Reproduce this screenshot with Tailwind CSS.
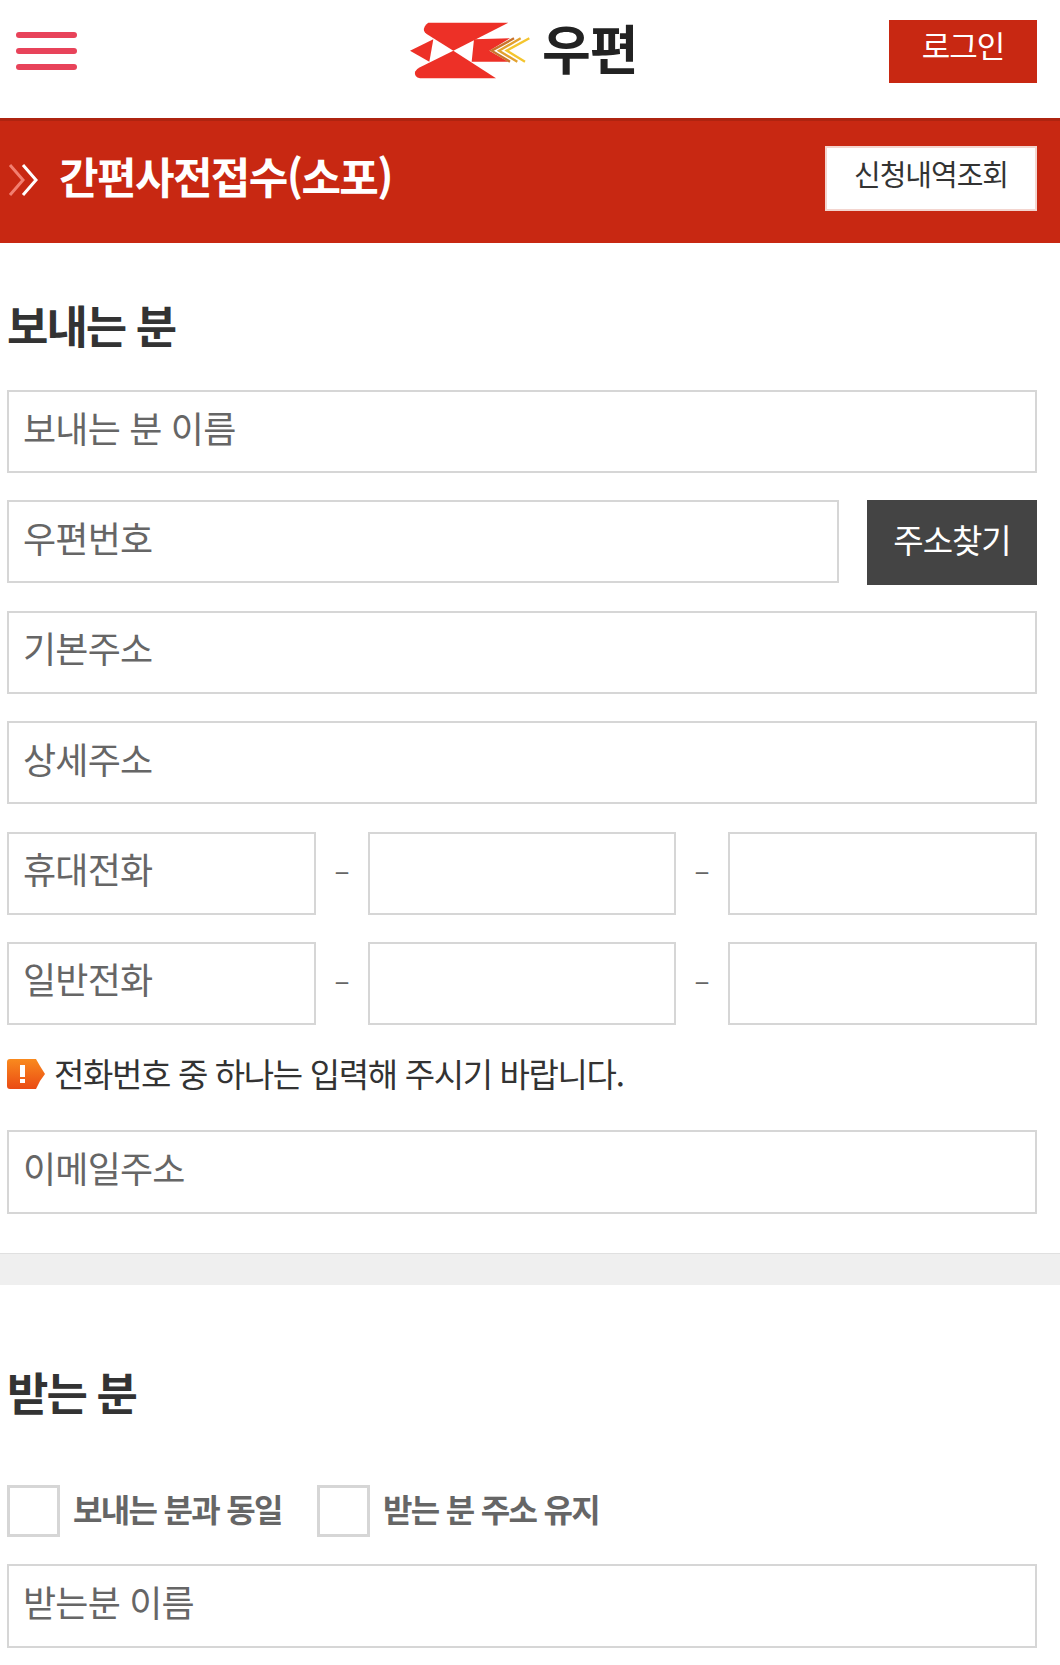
<!DOCTYPE html>
<html lang="ko">
<head>
    <meta charset="UTF-8">
    <meta name="viewport" content="width=device-width, initial-scale=1.0">
    <title>간편사전접수(소포)</title>
    <script src="https://cdn.jsdelivr.net/npm/@tailwindcss/browser@4"></script>
</head>
<body class="bg-white text-[#333] font-['Noto_Sans_CJK_KR','Noto_Sans',sans-serif] w-[1060px] h-[1665px] overflow-hidden">
    <header class="h-[118px] flex items-start pr-[23px]">
        <button class="w-[61px] ml-4 mt-[32px] flex flex-col gap-[10px]">
            <span class="block h-[6px] rounded-full bg-[#e8435a]"></span>
            <span class="block h-[6px] rounded-full bg-[#e8435a]"></span>
            <span class="block h-[6px] rounded-full bg-[#e8435a]"></span>
        </button>
        <div class="ml-[323px] mt-[10px] flex items-start">
            <svg width="150" height="80" viewBox="0 0 450 240">
                <path d="M72 62 Q70 48 85 38 L325 38 L160 122 L80 72 Q74 68 72 62 Z" fill="#ed3027"/>
                <path d="M160 122 L288 205 L60 205 Q42 200 45 185 Q48 178 60 172 Z" fill="#ed3027"/>
                <path d="M30 122 L100 88 L88 155 Z" fill="#ed3027"/>
                <path d="M222 88 L330 85 L268 122 L325 155 L215 155 Z" fill="#ed3027"/>
                <g fill="none" stroke-width="7">
                    <path d="M342 85 L275 122 L330 155" stroke="#c9742c"/>
                    <path d="M362 85 L297 122 L352 155" stroke="#e2a12f"/>
                    <path d="M388 85 L320 122 L375 155" stroke="#f4c52e"/>
                </g>
            </svg>
            <span class="ml-[-8px] mt-[4px] text-[53px] leading-[66px] font-bold text-[#222] tracking-[-1px]">우편</span>
        </div>
        <a class="ml-auto mt-5 w-[148px] h-[63px] bg-[#c82812] text-white text-[31px] leading-[50px] text-center tracking-[-1px]">로그인</a>
    </header>

    <div class="h-[125px] bg-[#c82812] border-t-[3px] border-[#ae2410] flex items-start pr-[23px]">
        <svg class="ml-2 mt-[42px] w-[32px] h-[34px]" viewBox="0 0 32 34" fill="none" stroke-width="3">
            <path d="M2 2 L15 17 L2 32" stroke="#f27f70"/>
            <path d="M15 2 L28 17 L15 32" stroke="#fff"/>
        </svg>
        <h1 class="ml-[19px] mt-[26px] text-[43px] leading-[56px] font-bold text-white tracking-[-1.6px]">간편사전접수(소포)</h1>
        <a class="ml-auto mt-[25px] w-[212px] h-[65px] bg-white border-[2px] border-[#f3d5cf] text-[#333] text-[29px] leading-[51px] text-center tracking-[-1px]">신청내역조회</a>
    </div>

    <main class="px-[7px] w-[1037px] box-content">
        <h2 class="mt-[59px] h-[88px] text-[45px] leading-[46px] font-bold text-[#333] tracking-[-2px]">보내는 분</h2>
        <div class="flex flex-col gap-[27.4px] w-[1030px]">
            <input class="w-full h-[83px] border-2 border-[#d6d6d6] px-[14px] pb-[10px] text-[36px] tracking-[-0.8px] placeholder:text-[#666]" placeholder="보내는 분 이름">
            <div class="flex justify-between h-[83px]">
                <input class="w-[832px] h-[83px] border-2 border-[#d6d6d6] px-[14px] pb-[10px] text-[36px] tracking-[-0.8px] placeholder:text-[#666]" placeholder="우편번호">
                <button class="w-[170px] h-[85px] shrink-0 bg-[#444] text-white text-[33px] pb-[6px] tracking-[-1px]">주소찾기</button>
            </div>
            <input class="w-full h-[83px] border-2 border-[#d6d6d6] px-[14px] pb-[10px] text-[36px] tracking-[-0.8px] placeholder:text-[#666]" placeholder="기본주소">
            <input class="w-full h-[83px] border-2 border-[#d6d6d6] px-[14px] pb-[10px] text-[36px] tracking-[-0.8px] placeholder:text-[#666]" placeholder="상세주소">
            <div class="flex items-center justify-between">
                <input class="w-[309px] h-[83px] border-2 border-[#d6d6d6] px-[14px] pb-[10px] text-[36px] tracking-[-0.8px] placeholder:text-[#666]" placeholder="휴대전화">
                <span class="mb-[8px] text-[28px] text-[#666]">–</span>
                <input class="w-[308px] h-[83px] border-2 border-[#d6d6d6]">
                <span class="mb-[8px] text-[28px] text-[#666]">–</span>
                <input class="w-[309px] h-[83px] border-2 border-[#d6d6d6]">
            </div>
            <div class="flex items-center justify-between">
                <input class="w-[309px] h-[83px] border-2 border-[#d6d6d6] px-[14px] pb-[10px] text-[36px] tracking-[-0.8px] placeholder:text-[#666]" placeholder="일반전화">
                <span class="mb-[8px] text-[28px] text-[#666]">–</span>
                <input class="w-[308px] h-[83px] border-2 border-[#d6d6d6]">
                <span class="mb-[8px] text-[28px] text-[#666]">–</span>
                <input class="w-[309px] h-[83px] border-2 border-[#d6d6d6]">
            </div>
        </div>
        <p class="mt-[28px] h-[77px] flex items-start text-[33px] leading-[40px] text-[#333] tracking-[-1.35px]">
            <svg class="mt-[6px] mr-[9px] shrink-0" width="38" height="30" viewBox="0 0 38 30">
                <defs>
                    <linearGradient id="noticeFill" x1="0" y1="0" x2="0" y2="1">
                        <stop offset="0" stop-color="#f98a1e"/>
                        <stop offset="1" stop-color="#ea4b14"/>
                    </linearGradient>
                </defs>
                <path d="M3 0 H29 L33 7 L38 15 L33 22 L29 30 H3 Q0 30 0 27 V3 Q0 0 3 0 Z" fill="url(#noticeFill)"/>
                <rect x="13" y="6" width="5" height="12" fill="#fff"/>
                <rect x="13" y="20" width="5" height="4" fill="#fff"/>
            </svg>
            전화번호 중 하나는 입력해 주시기 바랍니다.
        </p>
        <input class="block w-[1030px] h-[84px] border-2 border-[#d6d6d6] px-[14px] pb-[10px] text-[36px] tracking-[-0.8px] placeholder:text-[#666]" placeholder="이메일주소">
    </main>

    <div class="mt-[39px] h-[32px] bg-[#efefef] border-t border-[#e0e0e0]"></div>

    <section class="px-[7px]">
        <h2 class="mt-[84px] text-[45px] leading-[46px] font-bold text-[#333] tracking-[-2px]">받는 분</h2>
        <div class="mt-[70px] flex items-center h-[52px]">
            <span class="w-[53px] h-[52px] border-[3px] border-[#d6d6d6]"></span>
            <span class="ml-[13px] mb-[6px] w-[244px] text-[32px] font-bold text-[#666] tracking-[-1.7px]">보내는 분과 동일</span>
            <span class="w-[53px] h-[52px] border-[3px] border-[#d6d6d6]"></span>
            <span class="ml-[13px] mb-[6px] text-[32px] font-bold text-[#666] tracking-[-1.7px]">받는 분 주소 유지</span>
        </div>
        <input class="block mt-[27px] w-[1030px] h-[84px] border-2 border-[#d6d6d6] px-[14px] pb-[10px] text-[36px] tracking-[-0.8px] placeholder:text-[#666]" placeholder="받는분 이름">
    </section>
</body>
</html>
